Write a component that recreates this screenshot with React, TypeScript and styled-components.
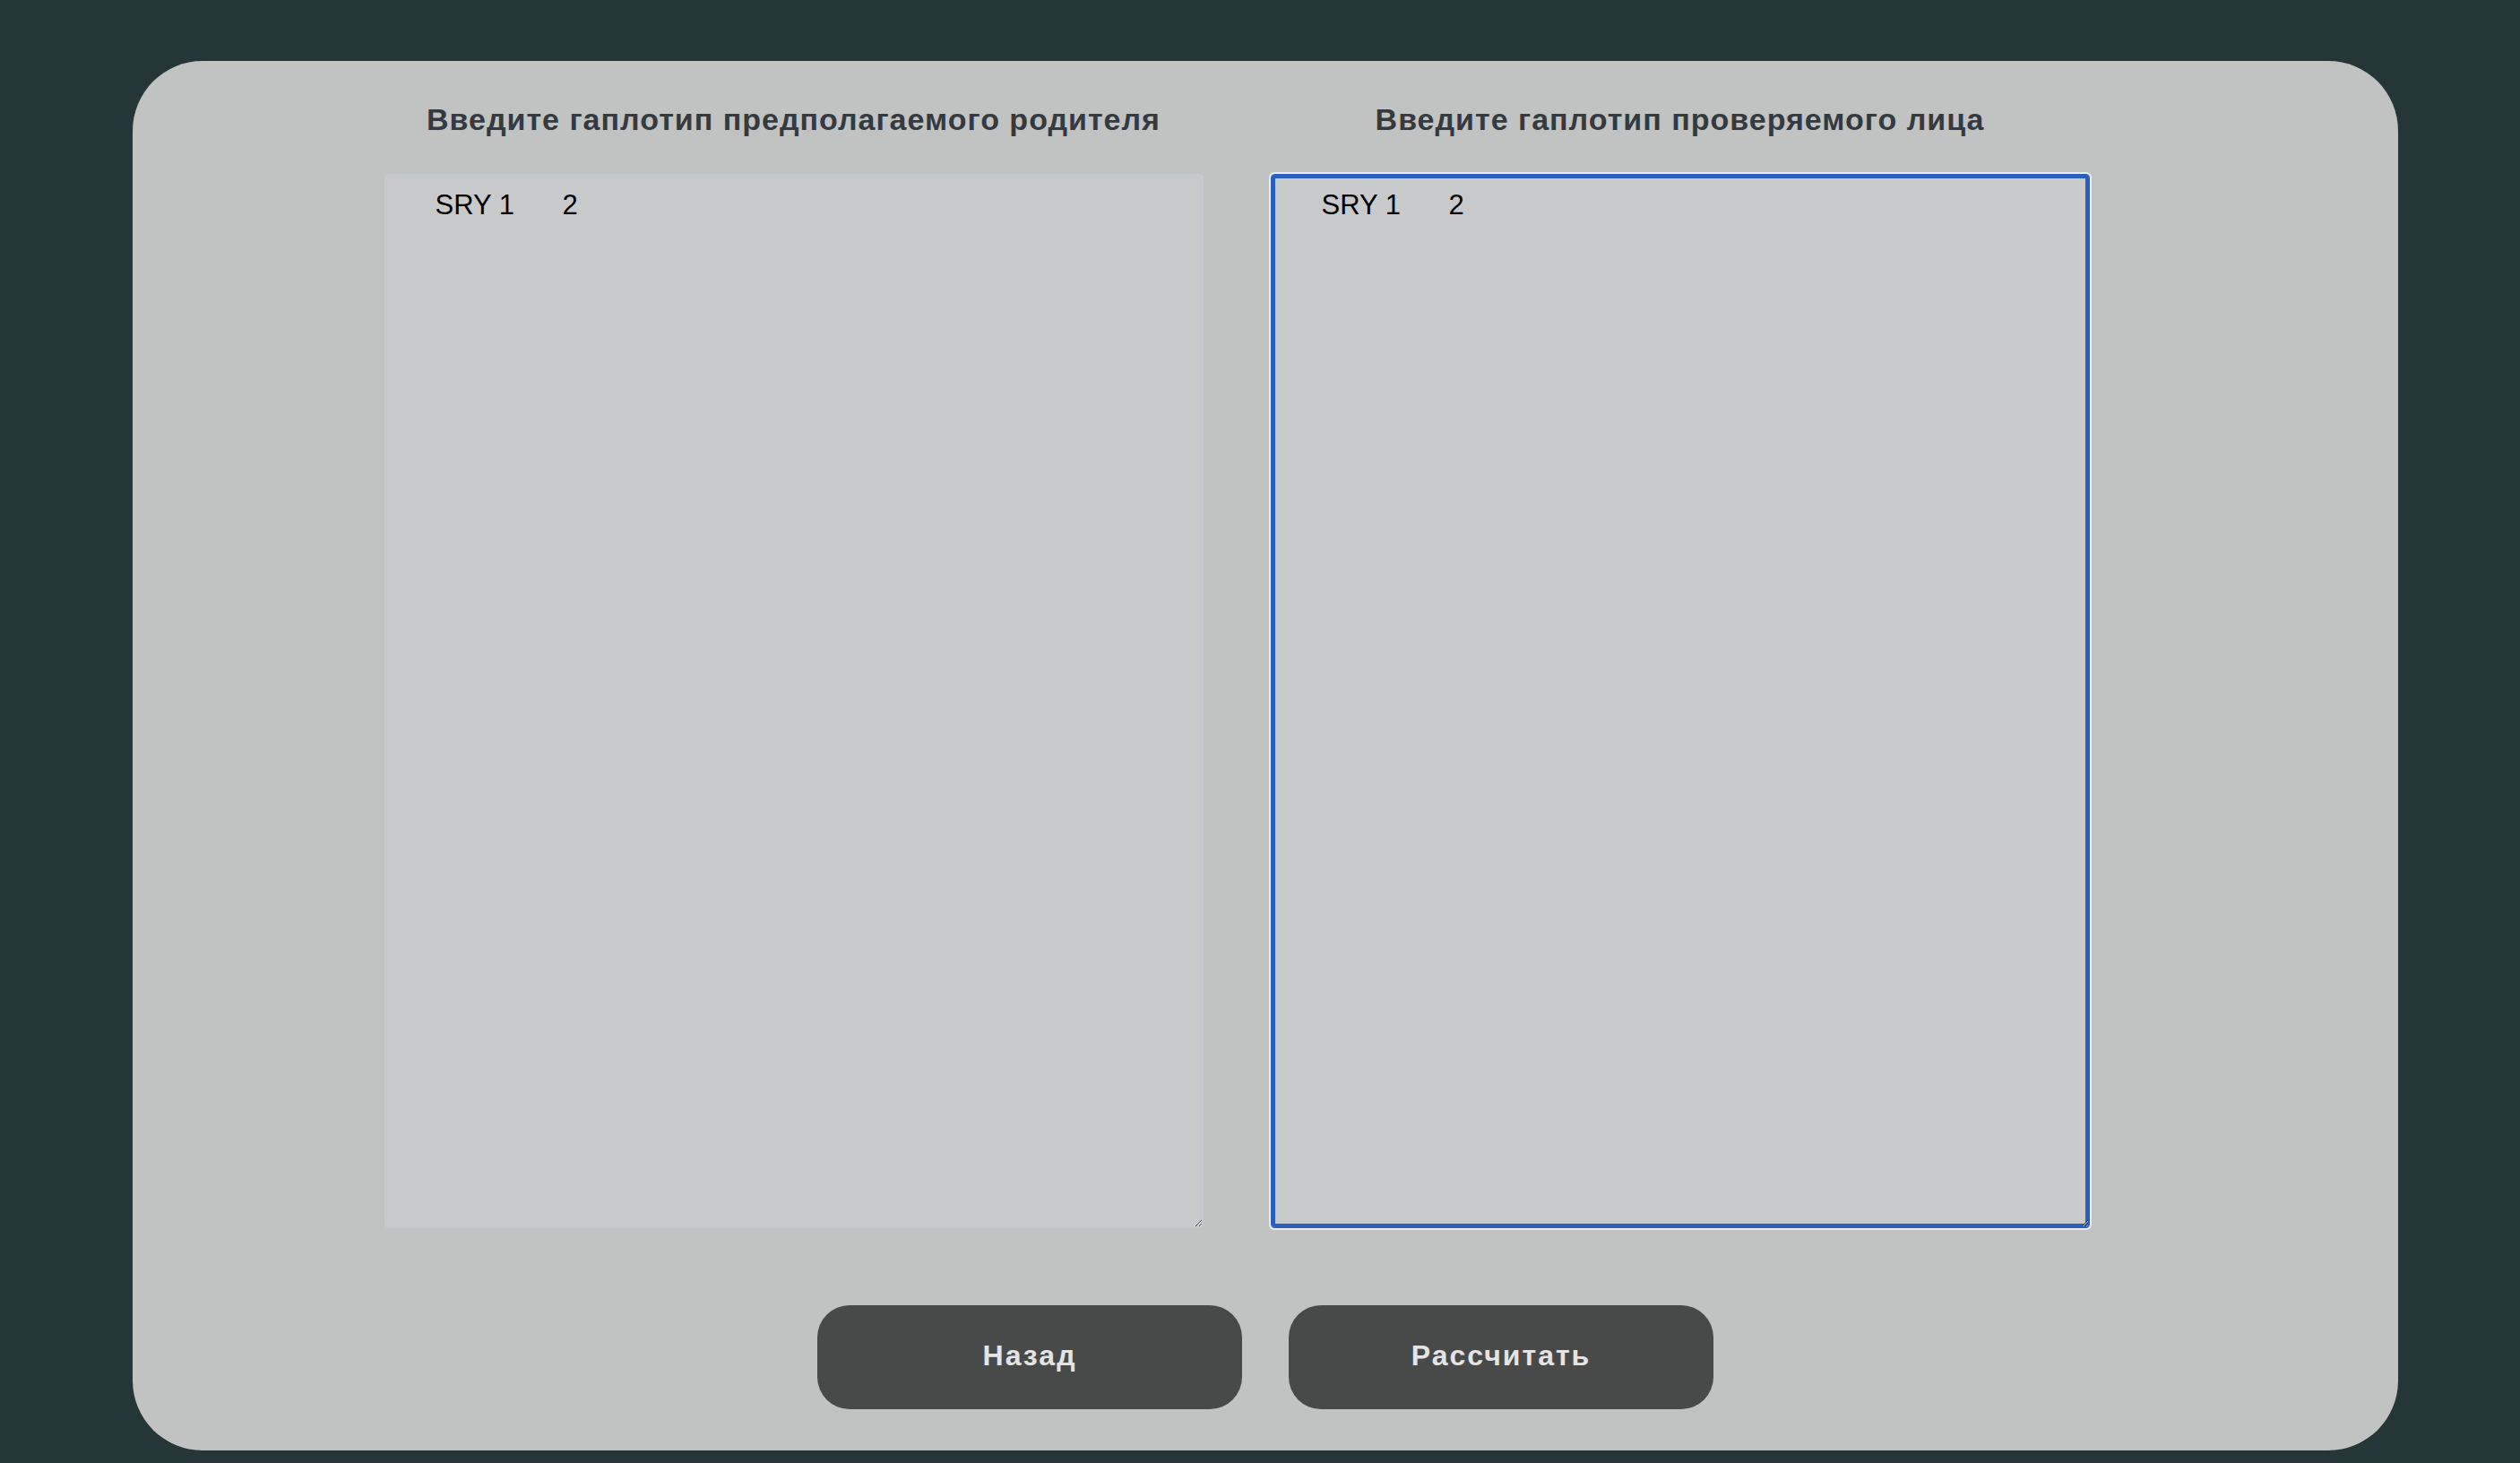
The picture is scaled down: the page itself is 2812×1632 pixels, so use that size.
import React, { useEffect, useRef } from "react";
import styled, { createGlobalStyle, css } from "styled-components";

const GlobalStyle = createGlobalStyle`
  html, body {
    margin: 0;
    padding: 0;
    background: #253639;
    font-family: "Liberation Sans", Arial, Helvetica, sans-serif;
  }
  * { box-sizing: border-box; }
`;

const Page = styled.div`
  min-height: 1632px;
  padding: 68px 136px 14px 148px;
  background: #253639;
`;

const Card = styled.main`
  height: 1550px;
  background: #c1c3c2;
  border-radius: 78px;
  padding: 46px 0 46px;
  display: flex;
  flex-direction: column;
`;

const Columns = styled.div`
  display: grid;
  grid-template-columns: 914px 914px;
  column-gap: 75px;
  justify-content: center;
  padding-right: 64px;
`;

const Column = styled.section`
  display: flex;
  flex-direction: column;
  align-items: stretch;
`;

const Title = styled.h2`
  margin: 0 0 42px;
  font-size: 34px;
  font-weight: 700;
  letter-spacing: 1px;
  line-height: 38px;
  color: #343a40;
  text-align: center;
`;

const Field = styled.textarea<{ $active?: boolean }>`
  display: block;
  width: 914px;
  height: 1176px;
  margin: 0;
  padding: 16px 56px;
  background: #c8c9cb;
  border: 1px solid #c3cbd2;
  border-radius: 4px;
  font-family: "Liberation Sans", Arial, Helvetica, sans-serif;
  font-size: 31px;
  line-height: normal;
  color: #000;
  tab-size: 71px;
  caret-color: #000;
  outline: none;
  resize: both;
  ${(p) =>
    p.$active &&
    css`
      border-color: #2a5fbe;
      box-shadow: inset 0 0 0 4px #2a5fbe, 0 0 0 2px #e9ecef;
    `}
`;

const Actions = styled.div`
  margin-top: auto;
  display: flex;
  justify-content: center;
  gap: 52px;
`;

const Button = styled.button`
  width: 474px;
  height: 116px;
  padding: 0 0 3px;
  border: none;
  border-radius: 36px;
  background: #484a49;
  color: #e4e4e4;
  font-family: "Liberation Sans", Arial, Helvetica, sans-serif;
  font-size: 32px;
  font-weight: 700;
  letter-spacing: 2px;
  cursor: pointer;
`;

export default function App() {
  const ref = useRef<HTMLTextAreaElement>(null);
  const text = "SRY 1\t2";

  useEffect(() => {
    const el = ref.current;
    if (el) {
      el.focus();
      el.setSelectionRange(text.length, text.length);
    }
  }, []);

  return (
    <>
      <GlobalStyle />
      <Page>
        <Card>
          <Columns>
            <Column>
              <Title>Введите гаплотип предполагаемого родителя</Title>
              <Field defaultValue={text} spellCheck={false} />
            </Column>
            <Column>
              <Title>Введите гаплотип проверяемого лица</Title>
              <Field ref={ref} $active defaultValue={text} spellCheck={false} />
            </Column>
          </Columns>
          <Actions>
            <Button>Назад</Button>
            <Button>Рассчитать</Button>
          </Actions>
        </Card>
      </Page>
    </>
  );
}
